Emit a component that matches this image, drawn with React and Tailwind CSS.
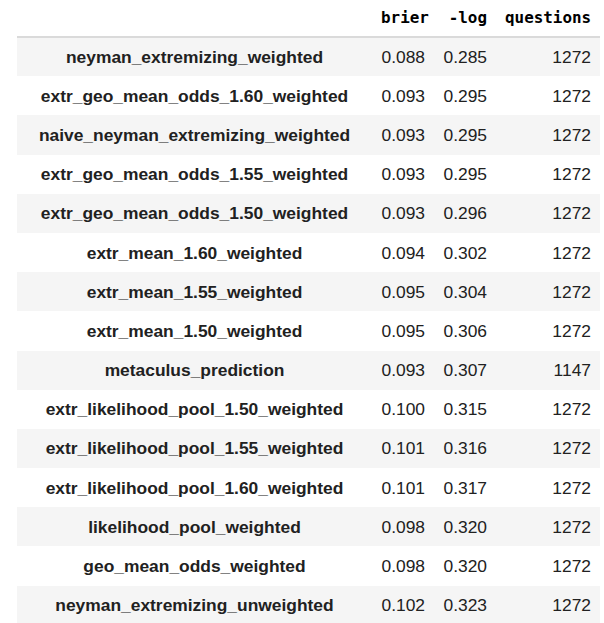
import React from 'react'

const rows = [
  ['neyman_extremizing_weighted', '0.088', '0.285', '1272'],
  ['extr_geo_mean_odds_1.60_weighted', '0.093', '0.295', '1272'],
  ['naive_neyman_extremizing_weighted', '0.093', '0.295', '1272'],
  ['extr_geo_mean_odds_1.55_weighted', '0.093', '0.295', '1272'],
  ['extr_geo_mean_odds_1.50_weighted', '0.093', '0.296', '1272'],
  ['extr_mean_1.60_weighted', '0.094', '0.302', '1272'],
  ['extr_mean_1.55_weighted', '0.095', '0.304', '1272'],
  ['extr_mean_1.50_weighted', '0.095', '0.306', '1272'],
  ['metaculus_prediction', '0.093', '0.307', '1147'],
  ['extr_likelihood_pool_1.50_weighted', '0.100', '0.315', '1272'],
  ['extr_likelihood_pool_1.55_weighted', '0.101', '0.316', '1272'],
  ['extr_likelihood_pool_1.60_weighted', '0.101', '0.317', '1272'],
  ['likelihood_pool_weighted', '0.098', '0.320', '1272'],
  ['geo_mean_odds_weighted', '0.098', '0.320', '1272'],
  ['neyman_extremizing_unweighted', '0.102', '0.323', '1272'],
]

const headCls =
  "h-[37px] px-[9px] text-right align-middle text-[15.9px] leading-[18px] font-bold text-black font-['DejaVu_Sans_Mono',monospace]"

export default function App() {
  return (
    <div className="min-h-screen bg-white pl-[17px] font-['Liberation_Sans',Arial,sans-serif]">
      <table className="w-[583px] table-fixed border-collapse">
        <colgroup>
          <col className="w-[355px]" />
          <col className="w-[62px]" />
          <col className="w-[62px]" />
          <col className="w-[104px]" />
        </colgroup>
        <thead>
          <tr className="border-b-2 border-[#dadada]">
            <th className={headCls}></th>
            <th className={headCls}>brier</th>
            <th className={headCls}>-log</th>
            <th className={headCls}>questions</th>
          </tr>
        </thead>
        <tbody className="text-[17.4px] leading-[20px] text-[#212121]">
          {rows.map((r, i) => (
            <tr key={r[0]} className={i % 2 === 0 ? 'bg-[#f5f5f5]' : 'bg-white'}>
              <th className="h-[39.2px] px-[9px] text-center font-bold whitespace-nowrap">{r[0]}</th>
              <td className="px-[9px] text-right">{r[1]}</td>
              <td className="px-[9px] text-right">{r[2]}</td>
              <td className="px-[9px] text-right">{r[3]}</td>
            </tr>
          ))}
        </tbody>
      </table>
    </div>
  )
}
